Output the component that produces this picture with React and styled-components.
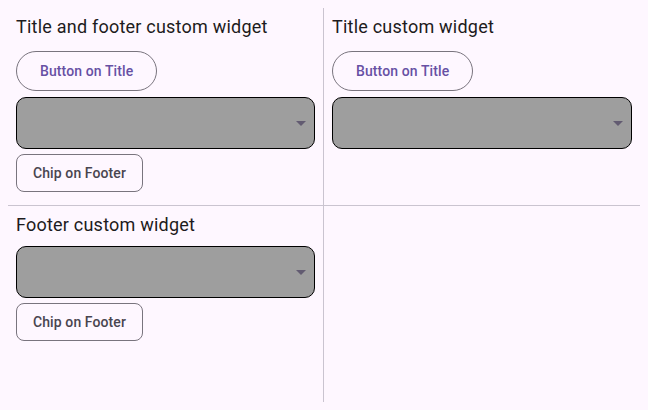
import React from "react";
import styled, { createGlobalStyle } from "styled-components";

const GlobalStyle = createGlobalStyle`
  html, body {
    margin: 0;
    padding: 0;
    background: #fef7ff;
    font-family: Roboto, "Noto Sans", sans-serif;
  }
  #root {
    padding: 8px;
  }
`;

const Grid = styled.div`
  display: grid;
  grid-template-columns: 316px 316px;
  grid-template-rows: 198px 196px;
`;

const Cell = styled.div`
  display: flex;
  flex-direction: column;
  align-items: flex-start;
  padding: 7px 8px;
  box-sizing: border-box;
  border-right: ${(p) => (p.$right ? "1px solid #cac4d0" : "none")};
  border-bottom: ${(p) => (p.$bottom ? "1px solid #cac4d0" : "none")};
`;

const Title = styled.div`
  font-size: 18px;
  line-height: 24px;
  letter-spacing: 0.22px;
  color: #1d1b20;
  margin-bottom: 9px;
`;

const TitleButton = styled.button`
  height: 40px;
  margin: 3px 0 6px;
  padding: 0 23px;
  border: 1px solid #79747e;
  border-radius: 20px;
  background: transparent;
  color: #6750a4;
  font-family: Roboto, sans-serif;
  font-size: 14px;
  font-weight: 500;
  letter-spacing: 0.1px;
  box-sizing: border-box;
`;

const Dropdown = styled.div`
  align-self: stretch;
  height: 52px;
  box-sizing: border-box;
  display: flex;
  align-items: center;
  justify-content: flex-end;
  padding-right: 1px;
  background: #9e9e9e;
  border: 1px solid #000;
  border-radius: 10px;
`;

const Chip = styled.div`
  height: 38px;
  margin-top: 5px;
  padding: 0 16px;
  display: flex;
  align-items: center;
  box-sizing: border-box;
  border: 1px solid #79747e;
  border-radius: 8px;
  color: #49454f;
  font-size: 14px;
  font-weight: 500;
  letter-spacing: 0.1px;
`;

const ArrowDrop = () => (
  <svg width="24" height="24" viewBox="0 0 24 24">
    <path d="M7 10l5 5 5-5z" fill="#625b71" />
  </svg>
);

const Widget = ({ title, button, footer, ...rest }) => (
  <Cell {...rest}>
    <Title>{title}</Title>
    {button && <TitleButton>Button on Title</TitleButton>}
    <Dropdown>
      <ArrowDrop />
    </Dropdown>
    {footer && <Chip>Chip on Footer</Chip>}
  </Cell>
);

export default function App() {
  return (
    <>
      <GlobalStyle />
      <Grid>
        <Widget title="Title and footer custom widget" button footer $right $bottom />
        <Widget title="Title custom widget" button $bottom />
        <Widget title="Footer custom widget" footer $right />
        <Cell />
      </Grid>
    </>
  );
}
